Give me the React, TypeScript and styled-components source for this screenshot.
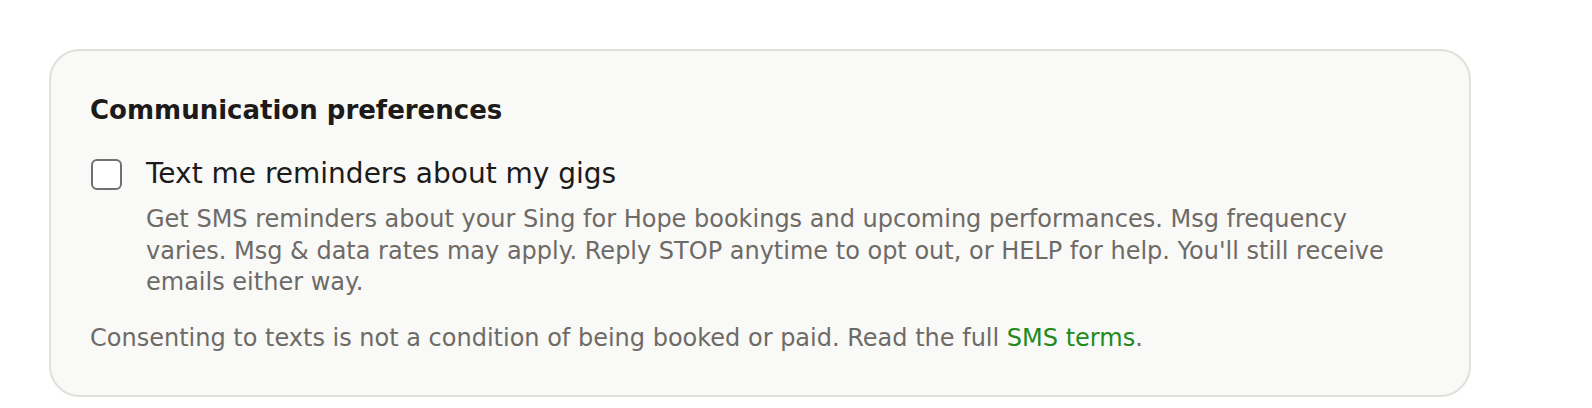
import React from 'react';
import styled, { createGlobalStyle } from 'styled-components';

const GlobalStyle = createGlobalStyle`
  html, body {
    margin: 0;
    padding: 0;
    background: #ffffff;
  }
  body {
    font-family: "DejaVu Sans", "Noto Sans", sans-serif;
    color: #1c1b19;
  }
`;

const Page = styled.div`
  padding: 49px 0 12px 49px;
`;

const Card = styled.section`
  box-sizing: border-box;
  width: 1422px;
  background: #f9f9f7;
  border: 2px solid #e2dfda;
  border-radius: 31px;
  padding: 43px 39px 41px 39px;
`;

const Title = styled.h2`
  margin: 0 0 30px;
  font-size: 26px;
  line-height: 32px;
  font-weight: 700;
  color: #1c1b19;
`;

const OptionRow = styled.label`
  display: grid;
  grid-template-columns: 32px 1fr;
  column-gap: 24px;
  align-items: start;
  cursor: pointer;
`;

const Box = styled.input`
  appearance: none;
  margin: 3px 0 0 1px;
  width: 31px;
  height: 31px;
  border: 2px solid #717070;
  border-radius: 6px;
  background: #ffffff;
  box-sizing: border-box;
  cursor: pointer;
`;

const OptionText = styled.div`
  display: flex;
  flex-direction: column;
  gap: 12px;
`;

const OptionLabel = styled.span`
  font-size: 28px;
  line-height: 36px;
  color: #1c1b19;
`;

const Hint = styled.p`
  margin: 0;
  font-size: 24px;
  line-height: 31.5px;
  color: #6e6a66;
`;

const Note = styled.p`
  margin: 24px 0 0;
  font-size: 24px;
  line-height: 31.5px;
  color: #6e6a66;
`;

const TermsLink = styled.a`
  color: #218a21;
  text-decoration: none;
`;

export default function App() {
  return (
    <>
      <GlobalStyle />
      <Page>
        <Card>
          <Title>Communication preferences</Title>
          <OptionRow>
            <Box type="checkbox" />
            <OptionText>
              <OptionLabel>Text me reminders about my gigs</OptionLabel>
              <Hint>
                Get SMS reminders about your Sing for Hope bookings and upcoming performances. Msg frequency
                varies. Msg &amp; data rates may apply. Reply STOP anytime to opt out, or HELP for help. You'll still
                receive emails either way.
              </Hint>
            </OptionText>
          </OptionRow>
          <Note>
            Consenting to texts is not a condition of being booked or paid. Read the full{' '}
            <TermsLink href="#">SMS terms</TermsLink>.
          </Note>
        </Card>
      </Page>
    </>
  );
}
